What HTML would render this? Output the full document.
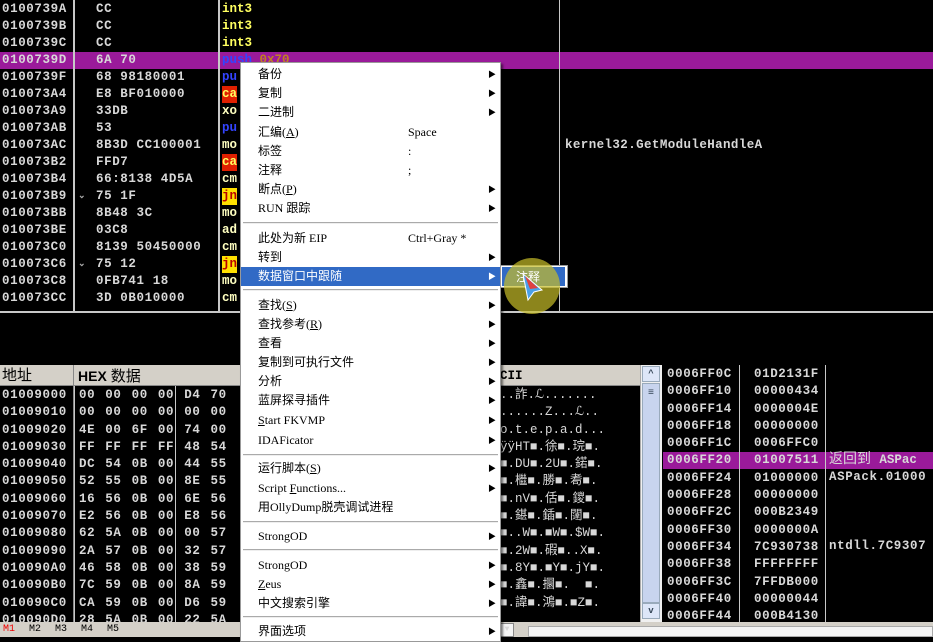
<!DOCTYPE html>
<html><head><meta charset="utf-8"><style>
*{margin:0;padding:0;box-sizing:border-box}
body{width:933px;height:637px;overflow:hidden;background:#000;position:relative;font-family:"Liberation Mono","Noto Sans CJK SC",monospace;font-size:12.5px;font-weight:bold;color:#d8d8d8}
.a{position:absolute;white-space:pre;line-height:17px}
.vl{position:absolute;background:#c8c8c8;width:2px}
.clip{position:absolute;left:0;top:0;width:933px;height:622px;overflow:hidden}
.menu{position:absolute;left:240px;top:62px;width:261px;height:580px;background:#fff;border:1px solid #999;box-shadow:2px 2px 2px rgba(0,0,0,.5);font-family:"Liberation Serif","Noto Sans CJK SC",serif;font-weight:normal;color:#000;font-size:12px}
.mi{position:absolute;left:0;width:259px;height:19px;line-height:19px;padding-left:17px;white-space:pre}
.mi .k{position:absolute;left:167px}
.mi .r{position:absolute;left:247px;font-size:8px}
.sep{position:absolute;left:2px;width:255px;height:2px;border-top:1px solid #aaa;border-bottom:1px solid #eee}
</style></head><body>
<!-- top pane -->
<div style="position:absolute;left:0;top:52px;width:933px;height:17px;background:#9a1a9a"></div>
<div class="vl" style="left:73px;top:0;height:311px"></div>
<div class="vl" style="left:218px;top:0;height:311px"></div>
<div class="vl" style="left:559px;top:0;height:311px;width:1px"></div>
<div style="position:absolute;left:0;top:311px;width:933px;height:2px;background:#c8c8c8"></div>
<div class="a" style="left:2px;top:1px;letter-spacing:.6px">0100739A
0100739B
0100739C
0100739D
0100739F
010073A4
010073A9
010073AB
010073AC
010073B2
010073B4
010073B9
010073BB
010073BE
010073C0
010073C6
010073C8
010073CC</div>
<div class="a" style="left:96px;top:1px;letter-spacing:.6px">CC
CC
CC
6A 70
68 98180001
E8 BF010000
33DB
53
8B3D CC100001
FFD7
66:8138 4D5A
75 1F
8B48 3C
03C8
8139 50450000
75 12
0FB741 18
3D 0B010000</div>
<div class="a" style="left:78px;top:188px;font-size:9px;color:#aaa">⌄</div>
<div class="a" style="left:78px;top:256px;font-size:9px;color:#aaa">⌄</div>
<div class="a" style="left:222px;top:1px;color:#ffff60">int3
int3
int3</div>
<div class="a" style="left:222px;top:52px;color:#3344ff">push <span style="color:#c08020">0x70</span></div>
<div class="a" style="left:222px;top:69px;color:#3344ff">pu</div>
<div class="a" style="left:222px;top:86px;background:#e02000;color:#ffff60">ca</div>
<div class="a" style="left:222px;top:103px;color:#ffffc0">xo</div>
<div class="a" style="left:222px;top:120px;color:#3344ff">pu</div>
<div class="a" style="left:222px;top:137px;color:#ffffc0">mo</div>
<div class="a" style="left:222px;top:154px;background:#e02000;color:#ffff60">ca</div>
<div class="a" style="left:222px;top:171px;color:#ffffc0">cm</div>
<div class="a" style="left:222px;top:188px;background:#ffe000;color:#b00">jn</div>
<div class="a" style="left:222px;top:205px;color:#ffffc0">mo</div>
<div class="a" style="left:222px;top:222px;color:#ffffc0">ad</div>
<div class="a" style="left:222px;top:239px;color:#ffffc0">cm</div>
<div class="a" style="left:222px;top:256px;background:#ffe000;color:#b00">jn</div>
<div class="a" style="left:222px;top:273px;color:#ffffc0">mo</div>
<div class="a" style="left:222px;top:290px;color:#ffffc0">cm</div>
<div class="a" style="left:565px;top:137px;letter-spacing:.4px">kernel32.GetModuleHandleA</div>

<div class="clip">
<!-- dump pane -->
<div style="position:absolute;left:0;top:365px;width:640px;height:21px;background:#d4d0c8;border-bottom:1px solid #888"></div>
<div class="a" style="left:2px;top:366px;color:#000;font-family:'Liberation Sans','Noto Sans CJK SC',sans-serif;font-weight:normal;font-size:15px;line-height:20px">地址</div>
<div class="a" style="left:78px;top:366px;color:#000;font-family:'Liberation Sans','Noto Sans CJK SC',sans-serif;font-size:14px;line-height:20px">HEX <span style="font-weight:normal;font-size:15px">数据</span></div>
<div class="a" style="left:500px;top:366px;color:#000;line-height:20px">CII</div>
<div class="vl" style="left:73px;top:365px;height:258px;width:1px;background:#888"></div>
<div class="vl" style="left:74px;top:386px;height:237px;width:1px"></div>
<div class="vl" style="left:175px;top:386px;height:237px;width:1px"></div>
<div class="a" style="left:2px;top:387px;letter-spacing:.6px;line-height:17.3px">01009000
01009010
01009020
01009030
01009040
01009050
01009060
01009070
01009080
01009090
010090A0
010090B0
010090C0
010090D0</div>
<div class="a" style="left:79px;top:387px;letter-spacing:.6px;line-height:17.3px;word-spacing:2px">00 00 00 00 D4 70
00 00 00 00 00 00
4E 00 6F 00 74 00
FF FF FF FF 48 54
DC 54 0B 00 44 55
52 55 0B 00 8E 55
16 56 0B 00 6E 56
E2 56 0B 00 E8 56
62 5A 0B 00 00 57
2A 57 0B 00 32 57
46 58 0B 00 38 59
7C 59 0B 00 8A 59
CA 59 0B 00 D6 59
28 5A 0B 00 22 5A</div>
<div class="a" style="left:500px;top:387px;line-height:17.3px;font-weight:normal">..詐.ℒ.......
......Z...ℒ..
o.t.e.p.a.d...
ÿÿHT■.徐■.琓■.
■.DU■.2U■.鍩■.
■.檵■.勝■.耈■.
■.nV■.佸■.鑁■.
■.鍖■.鍤■.闥■.
■..W■.■W■.$W■.
■.2W■.碬■..X■.
■.8Y■.■Y■.jY■.
■.鑫■.攌■.  ■.
■.諱■.鴻■.■Z■.</div>
<!-- scrollbar -->
<div style="position:absolute;left:640px;top:365px;width:22px;height:258px;background:#f0f0f0;border-left:1px solid #aaa"></div>
<div style="position:absolute;left:642px;top:366px;width:18px;height:16px;background:#dde6f8;border:1px solid #9ab;font-size:9px;text-align:center;line-height:14px;color:#345;font-weight:bold">^</div>
<div style="position:absolute;left:642px;top:383px;width:18px;height:220px;background:#c8d4ee;border:1px solid #9ab;color:#345;font-size:10px;text-align:center;line-height:20px">≡</div>
<div style="position:absolute;left:642px;top:603px;width:18px;height:16px;background:#dde6f8;border:1px solid #9ab;font-size:9px;text-align:center;line-height:14px;color:#345">v</div>

<!-- stack pane -->
<div style="position:absolute;left:663px;top:452px;width:270px;height:17px;background:#9a1a9a"></div>
<div class="vl" style="left:739px;top:365px;height:258px;width:1px"></div>
<div class="vl" style="left:825px;top:365px;height:258px;width:1px"></div>
<div class="a" style="left:667px;top:366px;letter-spacing:.6px;line-height:17.3px">0006FF0C
0006FF10
0006FF14
0006FF18
0006FF1C
0006FF20
0006FF24
0006FF28
0006FF2C
0006FF30
0006FF34
0006FF38
0006FF3C
0006FF40
0006FF44</div>
<div class="a" style="left:754px;top:366px;letter-spacing:.6px;line-height:17.3px">01D2131F
00000434
0000004E
00000000
0006FFC0
01007511
01000000
00000000
000B2349
0000000A
7C930738
FFFFFFFF
7FFDB000
00000044
000B4130</div>
<div class="a" style="left:829px;top:452px;font-weight:normal;font-family:'Liberation Mono','Noto Sans CJK SC',monospace;font-size:14px">返回到 <b style="font-size:12.5px">ASPac</b></div>
<div class="a" style="left:829px;top:469px;letter-spacing:.6px">ASPack.01000</div>
<div class="a" style="left:829px;top:538px;letter-spacing:.6px">ntdll.7C9307</div>
</div>

<!-- bottom bars -->
<div style="position:absolute;left:0;top:622px;width:240px;height:15px;background:#d4d0c8"></div>
<div class="a" style="left:3px;top:623px;line-height:14px;font-size:10px;font-weight:normal;color:#000;word-spacing:8px"><span style="color:#e00">M1</span> M2 M3 M4 M5</div>
<div style="position:absolute;left:497px;top:622px;width:436px;height:15px;background:#d4d0c8"></div>
<div style="position:absolute;left:500px;top:623px;width:14px;height:14px;background:#f4f4f4;border:1px solid #888;font-size:8px;text-align:center;line-height:12px">▼</div>
<div style="position:absolute;left:528px;top:626px;width:405px;height:11px;background:#f4f4f4;border:1px solid #aaa"></div>

<!-- menu -->
<div class="menu">
<div class="mi" style="top:2px">备份<span class="r">▶</span></div>
<div class="mi" style="top:21px">复制<span class="r">▶</span></div>
<div class="mi" style="top:40px">二进制<span class="r">▶</span></div>
<div class="mi" style="top:60px">汇编(<u>A</u>)<span class="k">Space</span></div>
<div class="mi" style="top:79px">标签<span class="k">:</span></div>
<div class="mi" style="top:98px">注释<span class="k">;</span></div>
<div class="mi" style="top:117px">断点(<u>P</u>)<span class="r">▶</span></div>
<div class="mi" style="top:136px">RUN 跟踪<span class="r">▶</span></div>
<div class="sep" style="top:159px"></div>
<div class="mi" style="top:166px">此处为新 EIP<span class="k">Ctrl+Gray *</span></div>
<div class="mi" style="top:185px">转到<span class="r">▶</span></div>
<div class="mi" style="top:204px;background:#316ac5;color:#fff">数据窗口中跟随<span class="r">▶</span></div>
<div class="sep" style="top:226px"></div>
<div class="mi" style="top:233px">查找(<u>S</u>)<span class="r">▶</span></div>
<div class="mi" style="top:252px">查找参考(<u>R</u>)<span class="r">▶</span></div>
<div class="mi" style="top:271px">查看<span class="r">▶</span></div>
<div class="mi" style="top:290px">复制到可执行文件<span class="r">▶</span></div>
<div class="mi" style="top:309px">分析<span class="r">▶</span></div>
<div class="mi" style="top:328px">蓝屏探寻插件<span class="r">▶</span></div>
<div class="mi" style="top:348px"><u>S</u>tart FKVMP<span class="r">▶</span></div>
<div class="mi" style="top:368px">IDAFicator<span class="r">▶</span></div>
<div class="sep" style="top:391px"></div>
<div class="mi" style="top:396px">运行脚本(<u>S</u>)<span class="r">▶</span></div>
<div class="mi" style="top:416px">Script <u>F</u>unctions...<span class="r">▶</span></div>
<div class="mi" style="top:435px">用OllyDump脱壳调试进程</div>
<div class="sep" style="top:458px"></div>
<div class="mi" style="top:464px">StrongOD<span class="r">▶</span></div>
<div class="sep" style="top:486px"></div>
<div class="mi" style="top:493px">StrongOD<span class="r">▶</span></div>
<div class="mi" style="top:512px"><u>Z</u>eus<span class="r">▶</span></div>
<div class="mi" style="top:531px">中文搜索引擎<span class="r">▶</span></div>
<div class="sep" style="top:553px"></div>
<div class="mi" style="top:559px">界面选项<span class="r">▶</span></div>
</div>
<!-- submenu -->
<div style="position:absolute;left:500px;top:265px;width:68px;height:23px;background:#fff;border:1px solid #999"></div>
<div style="position:absolute;left:502px;top:267px;width:63px;height:19px;background:#316ac5"></div>
<div style="position:absolute;left:504px;top:258px;width:56px;height:56px;border-radius:50%;background:rgba(200,190,40,.7)"></div>
<div class="a" style="left:516px;top:268px;color:#fff;font-family:'Noto Sans CJK SC',sans-serif;font-weight:normal;font-size:12px">注释</div>
<svg style="position:absolute;left:520px;top:272px" width="26" height="30"><path d="M3 2 L22 18 L14 20 L8 28 Z" fill="#4aa0e8" stroke="#fff"/><path d="M5 4 L18 16 L10 17 Z" fill="#e04040"/></svg>
</body></html>
